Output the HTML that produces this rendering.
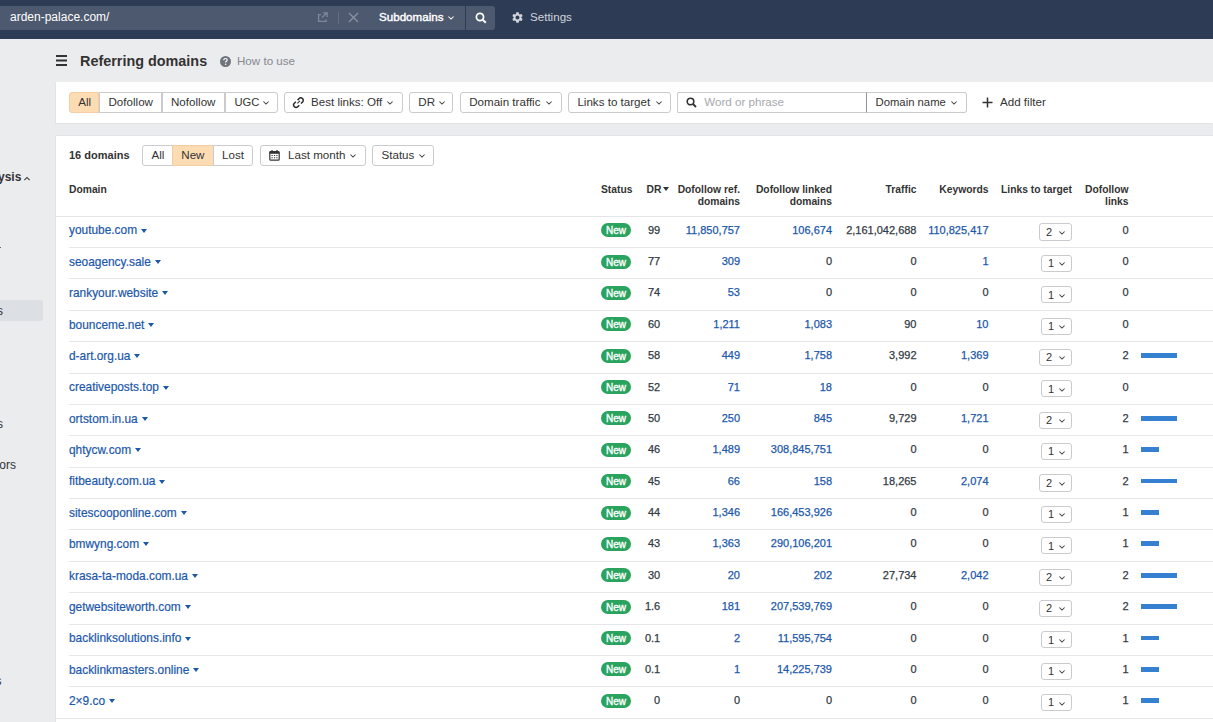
<!DOCTYPE html>
<html><head><meta charset="utf-8">
<style>
*{box-sizing:border-box;margin:0;padding:0}
html,body{width:1213px;height:722px;overflow:hidden}
body{background:#ebecee;font-family:"Liberation Sans",sans-serif;color:#333;position:relative}
.abs{position:absolute}
.t{position:absolute;white-space:nowrap;line-height:1}
#top{left:0;top:0;width:1213px;height:39px;background:#2e3b55}
#inp{left:0;top:6px;width:465px;height:24px;background:#4d596f}
#srch{left:466px;top:6px;width:29px;height:24px;background:#4d596f;border-radius:0 3px 3px 0}
#side{left:0;top:39px;width:56px;height:683px;background:#ebecee}
#card1{left:56px;top:82px;width:1157px;height:41px;background:#fff;box-shadow:-1px 1px 0 #e2e3e6}
#card2{left:56px;top:136px;width:1157px;height:587px;background:#fff;box-shadow:-1px 0 0 #e2e3e6,0 -1px 0 #e3e4e7}
.btn{position:absolute;height:20.5px;border:1px solid #c9cbce;border-radius:3px;background:#fff;font-size:11.6px;color:#333;white-space:nowrap;line-height:18px}
.btn .lbl{position:absolute;top:0}
.chev{position:absolute;overflow:visible}
.hdr{position:absolute;font-size:10.3px;font-weight:bold;color:#333;line-height:12px;white-space:nowrap}
.hdr.r{text-align:right}
.rb{position:absolute;left:69px;width:1144px;height:1px;background:#e6e7ea}
.dom{left:69px;font-size:11.9px;color:#1c58aa;-webkit-text-stroke:0.2px currentColor}
.caret{display:inline-block;width:0;height:0;border-left:3px solid transparent;border-right:3px solid transparent;border-top:4.5px solid #1c58aa;margin-left:4px;vertical-align:1.8px}
.num{font-size:11px;-webkit-text-stroke:0.25px currentColor}
.badge{position:absolute;left:601px;width:30px;height:14px;border-radius:7px;background:#2aa35f;color:#fff;font-size:10px;font-weight:normal;-webkit-text-stroke:0.35px #fff;text-align:center;line-height:15.6px}
.dd{position:absolute;height:17.2px;border:1px solid #c9cbce;border-radius:3px;background:#fff}
.ddn{position:absolute;left:6px;top:2.4px;font-size:11px;line-height:1;color:#333}
.bar{position:absolute;left:1141px;height:4.8px;background:#3580d0}

</style></head><body>
<div id="top" class="abs"></div>
<div id="inp" class="abs"></div>
<div id="srch" class="abs"></div>
<div class="t" style="left:10px;top:11.4px;font-size:12px;color:#fff">arden-palace.com/</div>
<!-- external link icon -->
<svg class="abs" style="left:316px;top:11px" width="13" height="13" viewBox="0 0 13 13"><path d="M5 3.6H2.6V10.4H10.1V8.4M6.1 6.6L11.1 1.6M7.1 1.9H11.1V5.9" fill="none" stroke="#7d879a" stroke-width="1.4"/></svg>
<div class="abs" style="left:338px;top:12px;width:1px;height:12px;background:#626d82"></div>
<svg class="abs" style="left:348px;top:12px" width="11" height="11" viewBox="0 0 11 11"><path d="M1 1L10 10M10 1L1 10" fill="none" stroke="#8a93a4" stroke-width="1.3"/></svg>
<div class="t" style="left:379px;top:10.6px;font-size:11.6px;color:#fff;-webkit-text-stroke:0.4px #fff">Subdomains</div>
<svg class="chev" style="left:447.1px;top:14.8px" width="8" height="6" viewBox="0 0 8 6"><path d="M1.4 1.5L4 4.1L6.6 1.5" fill="none" stroke="#fff" stroke-width="1.05"/></svg>
<svg class="abs" style="left:475px;top:12px" width="12" height="12" viewBox="0 0 12 12"><circle cx="5" cy="5" r="3.6" fill="none" stroke="#fff" stroke-width="1.7"/><path d="M7.6 7.6L10.8 10.8" stroke="#fff" stroke-width="2"/></svg>
<svg class="abs" style="left:511px;top:11px" width="13" height="13" viewBox="0 0 24 24"><path fill="#d0d4dc" d="M19.14 12.94c.04-.3.06-.61.06-.94 0-.32-.02-.64-.07-.94l2.03-1.58a.49.49 0 0 0 .12-.61l-1.92-3.32a.488.488 0 0 0-.59-.22l-2.39.96c-.5-.38-1.03-.7-1.62-.94l-.36-2.54a.484.484 0 0 0-.48-.41h-3.84c-.24 0-.43.17-.47.41l-.36 2.54c-.59.24-1.13.57-1.62.94l-2.39-.96c-.22-.08-.47 0-.59.22L2.74 8.87c-.12.21-.08.47.12.61l2.030 1.58c-.05.3-.09.63-.09.94s.02.64.07.94l-2.03 1.58a.49.49 0 0 0-.12.61l1.92 3.32c.12.22.37.29.59.22l2.39-.96c.5.38 1.03.7 1.62.94l.36 2.54c.05.24.24.41.48.41h3.84c.24 0 .44-.17.47-.41l.36-2.54c.59-.24 1.13-.56 1.62-.94l2.39.96c.22.08.47 0 .59-.22l1.92-3.32c.12-.22.07-.47-.12-.61l-2.01-1.58zM12 15.6c-1.98 0-3.6-1.62-3.6-3.6s1.62-3.6 3.6-3.6 3.6 1.62 3.6 3.6-1.62 3.6-3.6 3.6z"/></svg>
<div class="t" style="left:530px;top:11px;font-size:11.6px;color:#d0d4dc">Settings</div>

<div id="side" class="abs"></div>
<div class="t" style="left:-2px;top:171px;font-size:12px;font-weight:bold;color:#333">ysis</div>
<svg class="chev" style="left:23.1px;top:175.9px" width="8" height="6" viewBox="0 0 8 6"><path d="M1.4 4.1L4 1.5L6.6 4.1" fill="none" stroke="#333" stroke-width="1.05"/></svg>
<div class="abs" style="left:0;top:246.5px;width:1.3px;height:1.5px;background:#666"></div>
<div class="abs" style="left:0;top:300px;width:43px;height:21px;background:#dcdfe3;border-radius:0 3px 3px 0"></div>
<div class="t" style="left:-3px;top:305px;font-size:12px;color:#333">s</div>
<div class="t" style="left:-3px;top:418px;font-size:12px;color:#333">s</div>
<div class="t" style="left:-4px;top:459px;font-size:12px;color:#333">tors</div>
<div class="t" style="left:-4.5px;top:675px;font-size:12px;color:#333">s</div>

<div id="card1" class="abs"></div>
<div id="card2" class="abs"></div>

<!-- header -->
<svg class="abs" style="left:56px;top:55px" width="11" height="11" viewBox="0 0 11 11"><path d="M0 1.1H11M0 5.5H11M0 9.9H11" stroke="#333" stroke-width="2"/></svg>
<div class="t" style="left:80px;top:54px;font-size:14.4px;font-weight:bold;color:#333">Referring domains</div>
<svg class="abs" style="left:220px;top:55.5px" width="11" height="11" viewBox="0 0 11 11"><circle cx="5.5" cy="5.5" r="5.5" fill="#6f737a"/><path d="M3.8 4.2c0-1 .8-1.7 1.7-1.7s1.7.7 1.7 1.6c0 1.2-1.6 1.2-1.6 2.4" fill="none" stroke="#fff" stroke-width="1.2"/><circle cx="5.6" cy="8.3" r=".75" fill="#fff"/></svg>
<div class="t" style="left:237px;top:55px;font-size:11.6px;color:#85898f">How to use</div>

<!-- filter bar -->
<div class="btn" style="left:69px;top:92px;width:30px;background:#fddcb3;border-color:#f3cda3;border-radius:3px 0 0 3px"><span class="lbl" style="left:8.3px">All</span></div>
<div class="btn" style="left:99px;top:92px;width:63px;border-radius:0"><span class="lbl" style="left:8.5px">Dofollow</span></div>
<div class="btn" style="left:162px;top:92px;width:63px;border-radius:0"><span class="lbl" style="left:8px">Nofollow</span></div>
<div class="btn" style="left:225px;top:92px;width:53px;border-radius:0 3px 3px 0"><span class="lbl" style="left:8.5px;font-size:11.2px">UGC</span><svg class="chev" style="left:35.6px;top:6.7px" width="8" height="6" viewBox="0 0 8 6"><path d="M1.4 1.5L4 4.1L6.6 1.5" fill="none" stroke="#444" stroke-width="1.05"/></svg></div>
<div class="btn" style="left:284px;top:92px;width:119px"><svg class="abs" style="left:7px;top:3px" width="14" height="14" viewBox="0 0 14 14"><path d="M5.59 4.11L7.14 2.55A2.4 2.4 0 0 1 10.54 5.95L8.98 7.50M3.92 5.79L2.36 7.34A2.4 2.4 0 0 0 5.76 10.74L7.31 9.18" fill="none" stroke="#2b2b2b" stroke-width="1.5"/><path d="M5.4 7.4L7.85 4.95" stroke="#333" stroke-width="1.1"/></svg><span class="lbl" style="left:26px">Best links: Off</span><svg class="chev" style="left:101.2px;top:6.7px" width="8" height="6" viewBox="0 0 8 6"><path d="M1.4 1.5L4 4.1L6.6 1.5" fill="none" stroke="#444" stroke-width="1.05"/></svg></div>
<div class="btn" style="left:409px;top:92px;width:44px"><span class="lbl" style="left:8.3px">DR</span><svg class="chev" style="left:27.5px;top:6.7px" width="8" height="6" viewBox="0 0 8 6"><path d="M1.4 1.5L4 4.1L6.6 1.5" fill="none" stroke="#444" stroke-width="1.05"/></svg></div>
<div class="btn" style="left:460px;top:92px;width:102px"><span class="lbl" style="left:8.2px">Domain traffic</span><svg class="chev" style="left:84.3px;top:6.7px" width="8" height="6" viewBox="0 0 8 6"><path d="M1.4 1.5L4 4.1L6.6 1.5" fill="none" stroke="#444" stroke-width="1.05"/></svg></div>
<div class="btn" style="left:568px;top:92px;width:103px"><span class="lbl" style="left:8.4px">Links to target</span><svg class="chev" style="left:85.5px;top:6.7px" width="8" height="6" viewBox="0 0 8 6"><path d="M1.4 1.5L4 4.1L6.6 1.5" fill="none" stroke="#444" stroke-width="1.05"/></svg></div>
<div class="btn" style="left:677px;top:92px;width:190px;border-radius:1px 0 0 1px"><svg class="abs" style="left:7.6px;top:4px" width="11" height="11" viewBox="0 0 11 11"><circle cx="4.5" cy="4.5" r="3.3" fill="none" stroke="#333" stroke-width="1.6"/><path d="M7 7L10 10" stroke="#333" stroke-width="1.8"/></svg><span class="lbl" style="left:26.3px;color:#a6a9ae">Word or phrase</span></div>
<div class="btn" style="left:866px;top:92px;width:101px;border-radius:0 3px 3px 0;border-left-color:#8f9296"><span class="lbl" style="left:8.5px;font-size:11.3px">Domain name</span><svg class="chev" style="left:83.0px;top:6.7px" width="8" height="6" viewBox="0 0 8 6"><path d="M1.4 1.5L4 4.1L6.6 1.5" fill="none" stroke="#444" stroke-width="1.05"/></svg></div>
<svg class="abs" style="left:982px;top:96.5px" width="11" height="11" viewBox="0 0 11 11"><path d="M5.5 0.5V10.5M0.5 5.5H10.5" stroke="#333" stroke-width="1.5"/></svg>
<div class="t" style="left:1000px;top:96px;font-size:11.6px;color:#333">Add filter</div>

<!-- card2 controls -->
<div class="t" style="left:69px;top:149.5px;font-size:11px;font-weight:bold;color:#333">16 domains</div>
<div class="btn" style="left:142px;top:145px;width:31px;border-radius:3px 0 0 3px"><span class="lbl" style="top:0.4px;left:8.5px">All</span></div>
<div class="btn" style="left:172px;top:145px;width:42px;background:#fddcb3;border-color:#f3cda3;border-radius:0"><span class="lbl" style="top:0.4px;left:8.3px">New</span></div>
<div class="btn" style="left:213px;top:145px;width:40px;border-radius:0 3px 3px 0"><span class="lbl" style="top:0.4px;left:8px">Lost</span></div>
<div class="btn" style="left:260px;top:145px;width:106px"><svg class="abs" style="left:8px;top:4px" width="11" height="11" viewBox="0 0 11 11"><rect x="0.8" y="1.5" width="9.4" height="8.7" rx="1" fill="none" stroke="#333" stroke-width="1.2"/><rect x="0.8" y="1.5" width="9.4" height="2.3" fill="#333"/><path d="M2.5 5.5h1.2M4.9 5.5h1.2M7.3 5.5h1.2M2.5 7.7h1.2M4.9 7.7h1.2M7.3 7.7h1.2" stroke="#333" stroke-width="1.1"/><path d="M3 0v2M8 0v2" stroke="#333" stroke-width="1.2"/></svg><span class="lbl" style="top:0.4px;left:27px">Last month</span><svg class="chev" style="left:88.1px;top:7.2px" width="8" height="6" viewBox="0 0 8 6"><path d="M1.4 1.5L4 4.1L6.6 1.5" fill="none" stroke="#444" stroke-width="1.05"/></svg></div>
<div class="btn" style="left:372px;top:145px;width:62px"><span class="lbl" style="top:0.4px;left:8.5px">Status</span><svg class="chev" style="left:44.6px;top:7.2px" width="8" height="6" viewBox="0 0 8 6"><path d="M1.4 1.5L4 4.1L6.6 1.5" fill="none" stroke="#444" stroke-width="1.05"/></svg></div>

<!-- table header -->
<div class="hdr" style="left:69px;top:184px">Domain</div>
<div class="hdr" style="left:601px;top:184px">Status</div>
<div class="hdr" style="left:646.5px;top:184px">DR<span style="display:inline-block;width:0;height:0;border-left:3.1px solid transparent;border-right:3.1px solid transparent;border-top:4.6px solid #333;margin-left:2px;vertical-align:2.3px"></span></div>
<div class="hdr r" style="right:473px;top:184px">Dofollow ref.<br>domains</div>
<div class="hdr r" style="right:381px;top:184px">Dofollow linked<br>domains</div>
<div class="hdr r" style="right:296.5px;top:184px">Traffic</div>
<div class="hdr r" style="right:224.5px;top:184px">Keywords</div>
<div class="hdr" style="left:1001px;top:184px">Links to target</div>
<div class="hdr r" style="right:84.5px;top:184px">Dofollow<br>links</div>
<div class="abs" style="left:56px;top:216px;width:1157px;height:1px;background:#e3e5e8"></div>

<div class="rb" style="top:247px"></div><div class="t dom" style="top:225.49px">youtube.com<span class="caret"></span></div><div class="badge" style="top:223.19px">New</div><div class="t num" style="right:552.8px;top:224.69px;color:#333a44">99</div><div class="t num" style="right:473px;top:224.69px;color:#1c58aa">11,850,757</div><div class="t num" style="right:381px;top:224.69px;color:#1c58aa">106,674</div><div class="t num" style="right:296.5px;top:224.69px;color:#333a44">2,161,042,688</div><div class="t num" style="right:224.5px;top:224.69px;color:#1c58aa">110,825,417</div><div class="dd" style="left:1039px;width:33px;top:223.39px"><span class="ddn">2</span><svg class="chev" style="right:5px;top:5.5px" width="8" height="6" viewBox="0 0 8 6"><path d="M1.4 1.5L4 4.1L6.6 1.5" fill="none" stroke="#444" stroke-width="1.05"/></svg></div><div class="t num" style="right:84.5px;top:224.69px;color:#333a44">0</div><div class="rb" style="top:278px"></div><div class="t dom" style="top:256.86px">seoagency.sale<span class="caret"></span></div><div class="badge" style="top:254.56px">New</div><div class="t num" style="right:552.8px;top:256.06px;color:#333a44">77</div><div class="t num" style="right:473px;top:256.06px;color:#1c58aa">309</div><div class="t num" style="right:381px;top:256.06px;color:#333a44">0</div><div class="t num" style="right:296.5px;top:256.06px;color:#333a44">0</div><div class="t num" style="right:224.5px;top:256.06px;color:#1c58aa">1</div><div class="dd" style="left:1041px;width:31px;top:254.76px"><span class="ddn">1</span><svg class="chev" style="right:5px;top:5.5px" width="8" height="6" viewBox="0 0 8 6"><path d="M1.4 1.5L4 4.1L6.6 1.5" fill="none" stroke="#444" stroke-width="1.05"/></svg></div><div class="t num" style="right:84.5px;top:256.06px;color:#333a44">0</div><div class="rb" style="top:310px"></div><div class="t dom" style="top:288.24px">rankyour.website<span class="caret"></span></div><div class="badge" style="top:285.94px">New</div><div class="t num" style="right:552.8px;top:287.44px;color:#333a44">74</div><div class="t num" style="right:473px;top:287.44px;color:#1c58aa">53</div><div class="t num" style="right:381px;top:287.44px;color:#333a44">0</div><div class="t num" style="right:296.5px;top:287.44px;color:#333a44">0</div><div class="t num" style="right:224.5px;top:287.44px;color:#333a44">0</div><div class="dd" style="left:1041px;width:31px;top:286.14px"><span class="ddn">1</span><svg class="chev" style="right:5px;top:5.5px" width="8" height="6" viewBox="0 0 8 6"><path d="M1.4 1.5L4 4.1L6.6 1.5" fill="none" stroke="#444" stroke-width="1.05"/></svg></div><div class="t num" style="right:84.5px;top:287.44px;color:#333a44">0</div><div class="rb" style="top:341px"></div><div class="t dom" style="top:319.61px">bounceme.net<span class="caret"></span></div><div class="badge" style="top:317.31px">New</div><div class="t num" style="right:552.8px;top:318.81px;color:#333a44">60</div><div class="t num" style="right:473px;top:318.81px;color:#1c58aa">1,211</div><div class="t num" style="right:381px;top:318.81px;color:#1c58aa">1,083</div><div class="t num" style="right:296.5px;top:318.81px;color:#333a44">90</div><div class="t num" style="right:224.5px;top:318.81px;color:#1c58aa">10</div><div class="dd" style="left:1041px;width:31px;top:317.51px"><span class="ddn">1</span><svg class="chev" style="right:5px;top:5.5px" width="8" height="6" viewBox="0 0 8 6"><path d="M1.4 1.5L4 4.1L6.6 1.5" fill="none" stroke="#444" stroke-width="1.05"/></svg></div><div class="t num" style="right:84.5px;top:318.81px;color:#333a44">0</div><div class="rb" style="top:373px"></div><div class="t dom" style="top:350.99px">d-art.org.ua<span class="caret"></span></div><div class="badge" style="top:348.69px">New</div><div class="t num" style="right:552.8px;top:350.19px;color:#333a44">58</div><div class="t num" style="right:473px;top:350.19px;color:#1c58aa">449</div><div class="t num" style="right:381px;top:350.19px;color:#1c58aa">1,758</div><div class="t num" style="right:296.5px;top:350.19px;color:#333a44">3,992</div><div class="t num" style="right:224.5px;top:350.19px;color:#1c58aa">1,369</div><div class="dd" style="left:1039px;width:33px;top:348.89px"><span class="ddn">2</span><svg class="chev" style="right:5px;top:5.5px" width="8" height="6" viewBox="0 0 8 6"><path d="M1.4 1.5L4 4.1L6.6 1.5" fill="none" stroke="#444" stroke-width="1.05"/></svg></div><div class="t num" style="right:84.5px;top:350.19px;color:#333a44">2</div><div class="bar" style="top:353.19px;width:36px"></div><div class="rb" style="top:404px"></div><div class="t dom" style="top:382.36px">creativeposts.top<span class="caret"></span></div><div class="badge" style="top:380.06px">New</div><div class="t num" style="right:552.8px;top:381.56px;color:#333a44">52</div><div class="t num" style="right:473px;top:381.56px;color:#1c58aa">71</div><div class="t num" style="right:381px;top:381.56px;color:#1c58aa">18</div><div class="t num" style="right:296.5px;top:381.56px;color:#333a44">0</div><div class="t num" style="right:224.5px;top:381.56px;color:#333a44">0</div><div class="dd" style="left:1041px;width:31px;top:380.26px"><span class="ddn">1</span><svg class="chev" style="right:5px;top:5.5px" width="8" height="6" viewBox="0 0 8 6"><path d="M1.4 1.5L4 4.1L6.6 1.5" fill="none" stroke="#444" stroke-width="1.05"/></svg></div><div class="t num" style="right:84.5px;top:381.56px;color:#333a44">0</div><div class="rb" style="top:435px"></div><div class="t dom" style="top:413.74px">ortstom.in.ua<span class="caret"></span></div><div class="badge" style="top:411.44px">New</div><div class="t num" style="right:552.8px;top:412.94px;color:#333a44">50</div><div class="t num" style="right:473px;top:412.94px;color:#1c58aa">250</div><div class="t num" style="right:381px;top:412.94px;color:#1c58aa">845</div><div class="t num" style="right:296.5px;top:412.94px;color:#333a44">9,729</div><div class="t num" style="right:224.5px;top:412.94px;color:#1c58aa">1,721</div><div class="dd" style="left:1039px;width:33px;top:411.64px"><span class="ddn">2</span><svg class="chev" style="right:5px;top:5.5px" width="8" height="6" viewBox="0 0 8 6"><path d="M1.4 1.5L4 4.1L6.6 1.5" fill="none" stroke="#444" stroke-width="1.05"/></svg></div><div class="t num" style="right:84.5px;top:412.94px;color:#333a44">2</div><div class="bar" style="top:415.94px;width:36px"></div><div class="rb" style="top:467px"></div><div class="t dom" style="top:445.11px">qhtycw.com<span class="caret"></span></div><div class="badge" style="top:442.81px">New</div><div class="t num" style="right:552.8px;top:444.31px;color:#333a44">46</div><div class="t num" style="right:473px;top:444.31px;color:#1c58aa">1,489</div><div class="t num" style="right:381px;top:444.31px;color:#1c58aa">308,845,751</div><div class="t num" style="right:296.5px;top:444.31px;color:#333a44">0</div><div class="t num" style="right:224.5px;top:444.31px;color:#333a44">0</div><div class="dd" style="left:1041px;width:31px;top:443.01px"><span class="ddn">1</span><svg class="chev" style="right:5px;top:5.5px" width="8" height="6" viewBox="0 0 8 6"><path d="M1.4 1.5L4 4.1L6.6 1.5" fill="none" stroke="#444" stroke-width="1.05"/></svg></div><div class="t num" style="right:84.5px;top:444.31px;color:#333a44">1</div><div class="bar" style="top:447.31px;width:18px"></div><div class="rb" style="top:498px"></div><div class="t dom" style="top:476.49px">fitbeauty.com.ua<span class="caret"></span></div><div class="badge" style="top:474.19px">New</div><div class="t num" style="right:552.8px;top:475.69px;color:#333a44">45</div><div class="t num" style="right:473px;top:475.69px;color:#1c58aa">66</div><div class="t num" style="right:381px;top:475.69px;color:#1c58aa">158</div><div class="t num" style="right:296.5px;top:475.69px;color:#333a44">18,265</div><div class="t num" style="right:224.5px;top:475.69px;color:#1c58aa">2,074</div><div class="dd" style="left:1039px;width:33px;top:474.39px"><span class="ddn">2</span><svg class="chev" style="right:5px;top:5.5px" width="8" height="6" viewBox="0 0 8 6"><path d="M1.4 1.5L4 4.1L6.6 1.5" fill="none" stroke="#444" stroke-width="1.05"/></svg></div><div class="t num" style="right:84.5px;top:475.69px;color:#333a44">2</div><div class="bar" style="top:478.69px;width:36px"></div><div class="rb" style="top:529px"></div><div class="t dom" style="top:507.86px">sitescooponline.com<span class="caret"></span></div><div class="badge" style="top:505.56px">New</div><div class="t num" style="right:552.8px;top:507.06px;color:#333a44">44</div><div class="t num" style="right:473px;top:507.06px;color:#1c58aa">1,346</div><div class="t num" style="right:381px;top:507.06px;color:#1c58aa">166,453,926</div><div class="t num" style="right:296.5px;top:507.06px;color:#333a44">0</div><div class="t num" style="right:224.5px;top:507.06px;color:#333a44">0</div><div class="dd" style="left:1041px;width:31px;top:505.76px"><span class="ddn">1</span><svg class="chev" style="right:5px;top:5.5px" width="8" height="6" viewBox="0 0 8 6"><path d="M1.4 1.5L4 4.1L6.6 1.5" fill="none" stroke="#444" stroke-width="1.05"/></svg></div><div class="t num" style="right:84.5px;top:507.06px;color:#333a44">1</div><div class="bar" style="top:510.06px;width:18px"></div><div class="rb" style="top:561px"></div><div class="t dom" style="top:539.24px">bmwyng.com<span class="caret"></span></div><div class="badge" style="top:536.94px">New</div><div class="t num" style="right:552.8px;top:538.44px;color:#333a44">43</div><div class="t num" style="right:473px;top:538.44px;color:#1c58aa">1,363</div><div class="t num" style="right:381px;top:538.44px;color:#1c58aa">290,106,201</div><div class="t num" style="right:296.5px;top:538.44px;color:#333a44">0</div><div class="t num" style="right:224.5px;top:538.44px;color:#333a44">0</div><div class="dd" style="left:1041px;width:31px;top:537.14px"><span class="ddn">1</span><svg class="chev" style="right:5px;top:5.5px" width="8" height="6" viewBox="0 0 8 6"><path d="M1.4 1.5L4 4.1L6.6 1.5" fill="none" stroke="#444" stroke-width="1.05"/></svg></div><div class="t num" style="right:84.5px;top:538.44px;color:#333a44">1</div><div class="bar" style="top:541.44px;width:18px"></div><div class="rb" style="top:592px"></div><div class="t dom" style="top:570.61px">krasa-ta-moda.com.ua<span class="caret"></span></div><div class="badge" style="top:568.31px">New</div><div class="t num" style="right:552.8px;top:569.81px;color:#333a44">30</div><div class="t num" style="right:473px;top:569.81px;color:#1c58aa">20</div><div class="t num" style="right:381px;top:569.81px;color:#1c58aa">202</div><div class="t num" style="right:296.5px;top:569.81px;color:#333a44">27,734</div><div class="t num" style="right:224.5px;top:569.81px;color:#1c58aa">2,042</div><div class="dd" style="left:1039px;width:33px;top:568.51px"><span class="ddn">2</span><svg class="chev" style="right:5px;top:5.5px" width="8" height="6" viewBox="0 0 8 6"><path d="M1.4 1.5L4 4.1L6.6 1.5" fill="none" stroke="#444" stroke-width="1.05"/></svg></div><div class="t num" style="right:84.5px;top:569.81px;color:#333a44">2</div><div class="bar" style="top:572.81px;width:36px"></div><div class="rb" style="top:624px"></div><div class="t dom" style="top:601.99px">getwebsiteworth.com<span class="caret"></span></div><div class="badge" style="top:599.69px">New</div><div class="t num" style="right:552.8px;top:601.19px;color:#333a44">1.6</div><div class="t num" style="right:473px;top:601.19px;color:#1c58aa">181</div><div class="t num" style="right:381px;top:601.19px;color:#1c58aa">207,539,769</div><div class="t num" style="right:296.5px;top:601.19px;color:#333a44">0</div><div class="t num" style="right:224.5px;top:601.19px;color:#333a44">0</div><div class="dd" style="left:1039px;width:33px;top:599.89px"><span class="ddn">2</span><svg class="chev" style="right:5px;top:5.5px" width="8" height="6" viewBox="0 0 8 6"><path d="M1.4 1.5L4 4.1L6.6 1.5" fill="none" stroke="#444" stroke-width="1.05"/></svg></div><div class="t num" style="right:84.5px;top:601.19px;color:#333a44">2</div><div class="bar" style="top:604.19px;width:36px"></div><div class="rb" style="top:655px"></div><div class="t dom" style="top:633.36px">backlinksolutions.info<span class="caret"></span></div><div class="badge" style="top:631.06px">New</div><div class="t num" style="right:552.8px;top:632.56px;color:#333a44">0.1</div><div class="t num" style="right:473px;top:632.56px;color:#1c58aa">2</div><div class="t num" style="right:381px;top:632.56px;color:#1c58aa">11,595,754</div><div class="t num" style="right:296.5px;top:632.56px;color:#333a44">0</div><div class="t num" style="right:224.5px;top:632.56px;color:#333a44">0</div><div class="dd" style="left:1041px;width:31px;top:631.26px"><span class="ddn">1</span><svg class="chev" style="right:5px;top:5.5px" width="8" height="6" viewBox="0 0 8 6"><path d="M1.4 1.5L4 4.1L6.6 1.5" fill="none" stroke="#444" stroke-width="1.05"/></svg></div><div class="t num" style="right:84.5px;top:632.56px;color:#333a44">1</div><div class="bar" style="top:635.56px;width:18px"></div><div class="rb" style="top:686px"></div><div class="t dom" style="top:664.74px">backlinkmasters.online<span class="caret"></span></div><div class="badge" style="top:662.44px">New</div><div class="t num" style="right:552.8px;top:663.94px;color:#333a44">0.1</div><div class="t num" style="right:473px;top:663.94px;color:#1c58aa">1</div><div class="t num" style="right:381px;top:663.94px;color:#1c58aa">14,225,739</div><div class="t num" style="right:296.5px;top:663.94px;color:#333a44">0</div><div class="t num" style="right:224.5px;top:663.94px;color:#333a44">0</div><div class="dd" style="left:1041px;width:31px;top:662.64px"><span class="ddn">1</span><svg class="chev" style="right:5px;top:5.5px" width="8" height="6" viewBox="0 0 8 6"><path d="M1.4 1.5L4 4.1L6.6 1.5" fill="none" stroke="#444" stroke-width="1.05"/></svg></div><div class="t num" style="right:84.5px;top:663.94px;color:#333a44">1</div><div class="bar" style="top:666.94px;width:18px"></div><div class="rb" style="top:718px;left:56px;width:1157px"></div><div class="t dom" style="top:696.11px">2×9.co<span class="caret"></span></div><div class="badge" style="top:693.81px">New</div><div class="t num" style="right:552.8px;top:695.31px;color:#333a44">0</div><div class="t num" style="right:473px;top:695.31px;color:#333a44">0</div><div class="t num" style="right:381px;top:695.31px;color:#333a44">0</div><div class="t num" style="right:296.5px;top:695.31px;color:#333a44">0</div><div class="t num" style="right:224.5px;top:695.31px;color:#333a44">0</div><div class="dd" style="left:1041px;width:31px;top:694.01px"><span class="ddn">1</span><svg class="chev" style="right:5px;top:5.5px" width="8" height="6" viewBox="0 0 8 6"><path d="M1.4 1.5L4 4.1L6.6 1.5" fill="none" stroke="#444" stroke-width="1.05"/></svg></div><div class="t num" style="right:84.5px;top:695.31px;color:#333a44">1</div><div class="bar" style="top:698.31px;width:18px"></div>
</body></html>
